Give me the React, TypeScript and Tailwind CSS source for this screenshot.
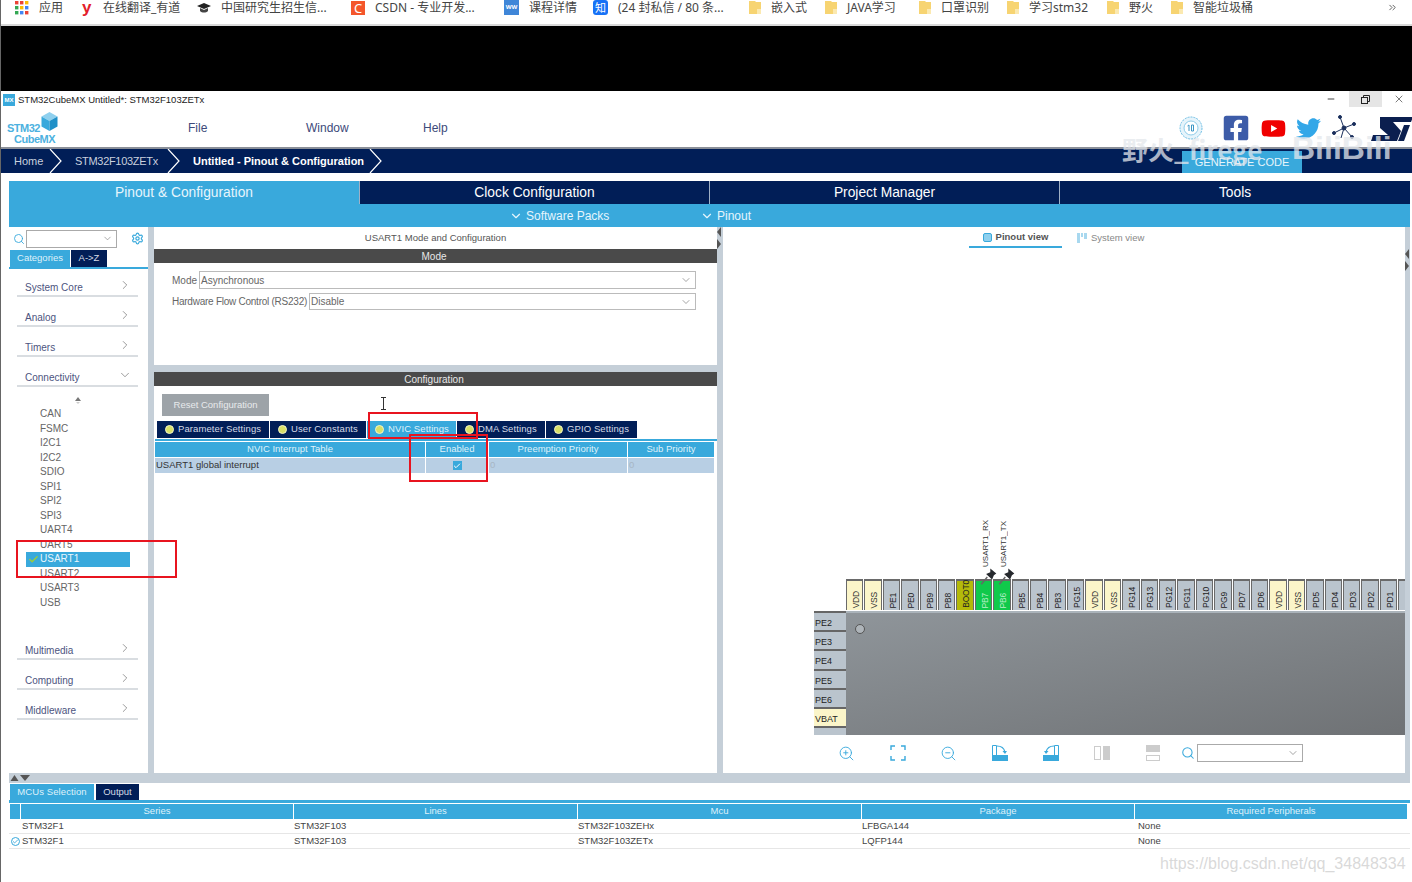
import React from "react";
import { ChevronDown, ChevronRight, Search, Settings, ZoomIn, ZoomOut, Minus, X, Check, ChevronsRight } from "lucide-react";
import { FaFacebookSquare, FaYoutube, FaTwitter } from "react-icons/fa";

const Folder = () => (
  <svg width="12" height="15" viewBox="0 0 12 15" className="shrink-0">
    <path d="M0 1h6l1 1h5v12H0z" fill="#f7d472" />
    <path d="M8 14V9h4v5z" fill="#fbe9b0" />
  </svg>
);

const Apps = () => (
  <svg width="14" height="14" viewBox="0 0 14 14" className="shrink-0">
    {[
      [0, 0, "#ea4335"], [5, 0, "#ea4335"], [10, 0, "#fbbc05"],
      [0, 5, "#34a853"], [5, 5, "#fbbc05"], [10, 5, "#4285f4"],
      [0, 10, "#34a853"], [5, 10, "#4285f4"], [10, 10, "#ea4335"],
    ].map(([x, y, c], i) => (
      <rect key={i} x={x as number} y={y as number} width="3.4" height="3.4" fill={c as string} />
    ))}
  </svg>
);

const bookmarks: { w: string; icon: React.ReactNode; text: string }[] = [
  { w: "w-[67px]", icon: <Apps />, text: "应用" },
  { w: "w-[115px]", icon: <span className="text-[17px] leading-[18px] h-[18px] font-bold text-[#e3202b] w-[11px] font-['Liberation_Sans',sans-serif]">y</span>, text: "在线翻译_有道" },
  {
    w: "w-[154px]",
    icon: <svg width="14" height="10" viewBox="0 0 14 10" className="shrink-0"><path d="M0 3l7-3 7 3-7 3z" fill="#222" /><path d="M3 5v3c2 2 6 2 8 0V5L7 7z" fill="#444" /></svg>,
    text: "中国研究生招生信...",
  },
  { w: "w-[153px]", icon: <span className="w-[14px] h-[14px] bg-[#f4562b] text-white text-[13px] leading-[14px] text-center shrink-0">C</span>, text: "CSDN - 专业开发..." },
  { w: "w-[89px]", icon: <span className="w-[15px] h-[15px] bg-[#3f86d8] text-white text-[6px] font-bold leading-[15px] text-center shrink-0">WW</span>, text: "课程详情" },
  { w: "w-[156px]", icon: <span className="w-[15px] h-[15px] rounded-[3px] bg-[#1772f6] text-white text-[11px] leading-[15px] text-center shrink-0">知</span>, text: "(24 封私信 / 80 条..." },
  { w: "w-[76px]", icon: <Folder />, text: "嵌入式" },
  { w: "w-[94px]", icon: <Folder />, text: "JAVA学习" },
  { w: "w-[88px]", icon: <Folder />, text: "口罩识别" },
  { w: "w-[100px]", icon: <Folder />, text: "学习stm32" },
  { w: "w-[64px]", icon: <Folder />, text: "野火" },
  { w: "w-[100px]", icon: <Folder />, text: "智能垃圾桶" },
];

function Crumb() {
  return (
    <svg width="14" height="24" viewBox="0 0 14 24" className="shrink-0" fill="none" stroke="#fff" strokeWidth="1.2">
      <path d="M1 0l11 12L1 24" />
    </svg>
  );
}

const Category = ({ name, open, first }: { name: string; open?: boolean; first?: boolean }) => (
  <div className={first ? "h-[28px] pt-[10px] ml-[8px] mr-[10px] border-b-2 border-[#d9dde1] flex items-center justify-between pl-[8px] pr-[6px] text-[10px] text-[#4d5480]" : "h-[30px] pt-[12px] ml-[8px] mr-[10px] border-b-2 border-[#d9dde1] flex items-center justify-between pl-[8px] pr-[6px] text-[10px] text-[#4d5480]"}>
    <span>{name}</span>
    {open ? <ChevronDown size={14} strokeWidth={1} className="-mt-[5px] text-[#555]" /> : <ChevronRight size={14} strokeWidth={1} className="-mt-[5px] text-[#555]" />}
  </div>
);

const items = ["CAN", "FSMC", "I2C1", "I2C2", "SDIO", "SPI1", "SPI2", "SPI3", "UART4", "UART5", "USART1", "USART2", "USART3", "USB"];

const topPins = ["VDD", "VSS", "PE1", "PE0", "PB9", "PB8", "BOOT0", "PB7", "PB6", "PB5", "PB4", "PB3", "PG15", "VDD", "VSS", "PG14", "PG13", "PG12", "PG11", "PG10", "PG9", "PD7", "PD6", "VDD", "VSS", "PD5", "PD4", "PD3", "PD2", "PD1", ""];

const pinColor = (n: string) => {
  if (n === "VDD" || n === "VSS") return "bg-[#fbf5c9] text-[#333]";
  if (n === "BOOT0") return "bg-[#b4b90a] text-[#222]";
  if (n === "PB7" || n === "PB6") return "bg-[#10c94b] text-[#b9efc9]";
  return "bg-[#bac4cd] text-[#222]";
};

const Pushpin = () => (
  <svg width="17" height="18" viewBox="0 0 14 15" className="absolute -top-[11px] left-[5px]">
    <path d="M8.500 0.500l5 4-2 1.500-1.500 3.500-5-4.500 3.500-1.500z" fill="#26292d" />
    <path d="M6 7.500L1 13.500" stroke="#666" strokeWidth="1.2" />
  </svg>
);

const leftPins = ["PE2", "PE3", "PE4", "PE5", "PE6", "VBAT", ""];

const Tab = ({ w, label, active }: { w: string; label: string; active?: boolean }) => (
  <div className={`${w} h-[17px] shrink-0 flex items-center pl-[8px] gap-[4px] text-[9.5px] tracking-[0.1px] ${active ? "bg-[#39a9dc] text-[#dff1fa]" : "bg-[#011e57] text-[#d5dbe6]"}`}>
    <span className="w-[9px] h-[9px] rounded-full bg-[#d8e068] border border-[#f3f5c5] shrink-0" />
    <span className="whitespace-nowrap">{label}</span>
  </div>
);

const RotateA = () => (
  <svg width="18" height="18" viewBox="0 0 18 18">
    <path d="M1.500 1.500h4v11" fill="none" stroke="#39a9dc" strokeWidth="1" />
    <path d="M1.500 1.500v11" fill="none" stroke="#39a9dc" strokeWidth="1" />
    <path d="M1 11h16v6H1z" fill="#39a9dc" />
    <path d="M6 2c4 0 7 2 8 6" fill="none" stroke="#39a9dc" strokeWidth="1.2" />
    <path d="M11.500 7l2.500 3 2-3z" fill="#39a9dc" />
  </svg>
);
const RotateB = () => (
  <svg width="18" height="18" viewBox="0 0 18 18">
    <path d="M16.500 1.500h-4v11M16.500 1.500v11" fill="none" stroke="#39a9dc" strokeWidth="1" />
    <path d="M1 11h16v6H1z" fill="#39a9dc" />
    <path d="M12 2C8 2 5 4 4 8" fill="none" stroke="#39a9dc" strokeWidth="1.2" />
    <path d="M2 7l2 3 2.500-3z" fill="#39a9dc" />
  </svg>
);

export default function App() {
  return (
    <div className="relative w-[1412px] h-[882px] overflow-hidden bg-white border-l border-[#666] font-['Liberation_Sans','Noto_Sans_CJK_SC',sans-serif] flex flex-col">
      {/* bookmarks */}
      <div className="h-[26px] shrink-0 flex items-center bg-white border-b-2 border-[#d8d8d8] pb-[9px] text-[12px] leading-none text-[#444] font-['Noto_Sans','Noto_Sans_CJK_SC',sans-serif]">
        <div className="w-[14px] shrink-0" />
        {bookmarks.map((b, i) => (
          <div key={i} className={`${b.w} shrink-0 flex items-center`}>
            <div className="flex items-center gap-[10px] whitespace-nowrap">
              {b.icon}
              <span>{b.text}</span>
            </div>
          </div>
        ))}
        <ChevronsRight size={11} className="ml-[116px] text-[#555]" />
      </div>
      {/* black */}
      <div className="h-[65px] shrink-0 bg-black" />
      {/* title bar */}
      <div className="h-[18px] shrink-0 flex items-center pl-[2px] text-[9.5px] text-[#222]">
        <span className="w-[12px] h-[12px] bg-[#39a9dc] text-white text-[6px] font-bold leading-[12px] text-center mr-[3px]">MX</span>
        <span className="whitespace-nowrap">STM32CubeMX Untitled*: STM32F103ZETx</span>
        <div className="ml-auto flex items-center h-[16px] self-start">
          <Minus size={10} strokeWidth={2.2} className="text-[#333] mr-[13px]" />
          <div className="w-[33px] h-[16px] bg-[#e5e5e5] flex items-center justify-center">
            <svg width="9" height="9" viewBox="0 0 9 9" fill="none" stroke="#222"><rect x="0.5" y="2.5" width="6" height="6" /><path d="M2.5 2.5v-2h6v6h-2" /></svg>
          </div>
          <X size={12} strokeWidth={1.2} className="text-[#222] ml-[11px] mr-[7px]" />
        </div>
      </div>
      {/* menu */}
      <div className="h-[40px] shrink-0 flex items-center relative border-b-2 border-[#8a8f98]">
        <div className="w-[187px] shrink-0 relative h-full pl-[6px] pt-[14px]">
          <div className="text-[11px] leading-[11px] text-[#4cb1e0] font-bold tracking-[-0.5px]">STM32</div>
          <div className="text-[11px] leading-[11px] text-[#4cb1e0] font-bold pl-[7px] tracking-[-0.5px]">CubeMX</div>
          <svg width="17" height="19" viewBox="0 0 17 19" className="absolute left-[40px] top-[3px]">
            <path d="M8.500 0l8 4.500-8 4.500-8-4.500z" fill="#8fd0ee" />
            <path d="M0.500 4.500l8 4.500v10l-8-4.500z" fill="#39a9dc" />
            <path d="M16.500 4.500l-8 4.500v10l8-4.500z" fill="#1f90c8" />
          </svg>
        </div>
        <div className="flex text-[12px] text-[#3d4a7a]">
          <span className="w-[118px]">File</span>
          <span className="w-[117px]">Window</span>
          <span>Help</span>
        </div>
        <div className="ml-auto flex items-center h-full relative">
          <svg width="24" height="24" viewBox="0 0 24 24" className="mr-[19px]">
            <circle cx="12" cy="12" r="11" fill="#e6f4fb" stroke="#6bbde4" strokeWidth="1" strokeDasharray="2 1" />
            <circle cx="12" cy="12" r="7" fill="#fff" stroke="#8fcdea" />
            <path d="M8.500 10l1.500-1v6M12.500 9h2v6h-2z" fill="none" stroke="#3d97c6" strokeWidth="1" />
          </svg>
          <FaFacebookSquare size={28} className="text-[#3d5ca8] mr-[11px]" />
          <FaYoutube size={25} className="text-[#f00000] mr-[10px]" />
          <FaTwitter size={25} className="text-[#33a7e8] mr-[10px]" />
          <svg width="26" height="26" viewBox="0 0 26 26" className="mr-[14px]" fill="#1a2f5c" stroke="#1a2f5c" strokeWidth="1">
            <path d="M13 13L9 2M13 13l10-4M13 13l8 9M13 13l-10 5M13 13l-3 10" />
            <circle cx="9" cy="2" r="1.5" /><circle cx="23" cy="9" r="1.5" /><circle cx="21" cy="22" r="1.500" /><circle cx="3" cy="18" r="1.5" /><circle cx="13" cy="13" r="2" />
          </svg>
          <svg width="42" height="24" viewBox="0 0 42 24" className="-mr-[1px] mt-[1px]" fill="#0b1f4f">
            <path d="M9 0H42L40 5H22L30 14L26 24H0L2 18H17L9 11Z" />
            <path d="M33 8H39L33 24H27Z" />
          </svg>
        </div>
      </div>
      {/* breadcrumb */}
      <div className="h-[24px] shrink-0 bg-[#011e57] flex items-center text-[11px] text-[#c9d0de] relative">
        <span className="pl-[13px] w-[48px] shrink-0">Home</span>
        <Crumb />
        <span className="ml-[12px] w-[92px] shrink-0 whitespace-nowrap tracking-[-0.3px]">STM32F103ZETx</span>
        <Crumb />
        <span className="ml-[12px] w-[176px] shrink-0 whitespace-nowrap font-bold text-white text-[11px]">Untitled - Pinout &amp; Configuration</span>
        <Crumb />
        <div className="ml-auto mr-[110px] w-[120px] h-[22px] self-end bg-[#39a9dc] text-[#e8f5fb] text-[11px] flex items-center justify-center whitespace-nowrap">GENERATE CODE</div>
      </div>
      <div className="h-[8px] shrink-0 bg-white" />
      {/* main tabs */}
      <div className="ml-[8px] mr-[2px] shrink-0 flex h-[23px] text-[13.8px]">
        <div className="w-[350px] pt-[1px] bg-[#39a9dc] text-[#e6f5fc] flex items-center justify-center">Pinout &amp; Configuration</div>
        <div className="w-[350px] pt-[1px] bg-[#011e57] text-white flex items-center justify-center border-l border-[#9fb0c6]">Clock Configuration</div>
        <div className="w-[350px] pt-[1px] bg-[#011e57] text-white flex items-center justify-center border-l border-[#9fb0c6]">Project Manager</div>
        <div className="flex-1 pt-[1px] bg-[#011e57] text-white flex items-center justify-center border-l border-[#9fb0c6]">Tools</div>
      </div>
      <div className="ml-[8px] mr-[2px] shrink-0 h-[23px] bg-[#39a9dc] text-[12px] text-[#e6f5fc] flex items-center">
        <div className="w-[500px]" />
        <ChevronDown size={14} className="mr-[3px]" />
        <span className="w-[174px] shrink-0">Software Packs</span>
        <ChevronDown size={14} className="mr-[3px]" />
        <span>Pinout</span>
      </div>
      {/* main */}
      <div className="h-[546px] shrink-0 flex ml-[8px] mr-[2px]">
        {/* left */}
        <div className="w-[139px] shrink-0 flex flex-col">
          <div className="h-[23px] flex items-center pl-[4px]">
            <Search size={12} strokeWidth={1.8} className="text-[#39a9dc]" />
            <div className="w-[91px] h-[18px] border border-[#aaa] flex items-center justify-end pr-[3px] ml-[1px]">
              <ChevronDown size={11} strokeWidth={1.2} className="text-[#666]" />
            </div>
            <Settings size={13} strokeWidth={2.2} className="text-[#39a9dc] ml-[14px]" />
          </div>
          <div className="h-[19px] flex items-end border-b-2 border-[#39a9dc] pl-[1px] text-[9.5px]">
            <div className="w-[60px] h-[17px] bg-[#39a9dc] text-[#dff1fa] flex items-center justify-center">Categories</div>
            <div className="w-[36px] h-[17px] ml-[1px] bg-[#011e57] text-[#d5dbe6] flex items-center justify-center">A-&gt;Z</div>
          </div>
          <Category first name="System Core" />
          <Category name="Analog" />
          <Category name="Timers" />
          <Category name="Connectivity" open />
          <div className="h-[243px] pt-[10px] text-[10px] text-[#666]">
            <div className="h-[10px] flex justify-center pr-[2px]">
              <svg width="8" height="8" viewBox="0 0 8 8"><path d="M4 0l3 4H1z" fill="#777" /><path d="M2 5h4l-2 2z" fill="#ccc" /></svg>
            </div>
            {items.map((it) => (
              <div key={it} className={it === "USART1" ? "h-[14.5px] leading-[14.5px] ml-[17px] w-[104px] bg-[#39a9dc] text-[#eaf6fc] pl-[14px] relative" : "h-[14.5px] leading-[14.5px] ml-[17px] pl-[14px]"}>
                {it === "USART1" && <Check size={11} strokeWidth={3} className="absolute left-[2px] top-[2px] text-[#9ccc3c]" />}
                {it}
              </div>
            ))}
          </div>
          <Category name="Multimedia" />
          <Category name="Computing" />
          <Category name="Middleware" />
        </div>
        <div className="w-[6px] shrink-0 bg-[#c5cfd8]" />
        {/* middle */}
        <div className="w-[563px] shrink-0 flex flex-col bg-[#c5cfd8]">
          <div className="h-[138px] shrink-0 bg-white flex flex-col">
            <div className="h-[22px] flex items-center justify-center text-[9.5px] text-[#555] pt-[1px]">USART1 Mode and Configuration</div>
            <div className="h-[14px] bg-[#4a4a4a] text-[#e8e8e8] text-[10px] flex items-center justify-center pr-[3px]">Mode</div>
            <div className="pl-[18px] mt-[8px] flex items-center text-[10px] text-[#666] h-[18px]">
              <span className="w-[27px]">Mode</span>
              <div className="w-[497px] h-[18px] border border-[#bbb] flex items-center pl-[1px] justify-between pr-[3px]">
                <span>Asynchronous</span>
                <ChevronDown size={12} strokeWidth={1.2} />
              </div>
            </div>
            <div className="pl-[18px] mt-[4px] flex items-center text-[10px] text-[#666] h-[17px]">
              <span className="w-[137px] whitespace-nowrap tracking-[-0.25px]">Hardware Flow Control (RS232)</span>
              <div className="w-[387px] h-[17px] border border-[#bbb] flex items-center pl-[1px] justify-between pr-[3px]">
                <span>Disable</span>
                <ChevronDown size={12} strokeWidth={1.2} />
              </div>
            </div>
          </div>
          <div className="h-[7px] shrink-0" />
          <div className="flex-1 bg-white flex flex-col">
            <div className="h-[14px] shrink-0 bg-[#4a4a4a] text-[#e8e8e8] text-[10px] flex items-center justify-center pr-[3px]">Configuration</div>
            <div className="h-[22px] w-[107px] mt-[8px] ml-[8px] bg-[#9da3a8] text-[#e8eaec] text-[9.5px] flex items-center justify-center shrink-0">Reset Configuration</div>
            <div className="flex gap-[1px] mt-[5px] ml-[3px] shrink-0">
              <Tab w="w-[112px]" label="Parameter Settings" />
              <Tab w="w-[96px]" label="User Constants" />
              <Tab w="w-[89px]" label="NVIC Settings" active />
              <Tab w="w-[88px]" label="DMA Settings" />
              <Tab w="w-[91px]" label="GPIO Settings" />
            </div>
            <div className="h-[2px] bg-[#39a9dc] mt-[1px] ml-[1px] shrink-0" />
            <div className="flex mt-[1px] ml-[1px] h-[15px] text-[9.5px] text-[#dff1fa] gap-[1px] shrink-0">
              <div className="w-[270px] bg-[#39a9dc] flex items-center justify-center">NVIC Interrupt Table</div>
              <div className="w-[62px] bg-[#39a9dc] flex items-center justify-center">Enabled</div>
              <div className="w-[138px] bg-[#39a9dc] flex items-center justify-center">Preemption Priority</div>
              <div className="w-[86px] bg-[#39a9dc] flex items-center justify-center">Sub Priority</div>
            </div>
            <div className="flex mt-[1px] ml-[1px] h-[15px] text-[9.5px] text-[#333] gap-[1px] shrink-0">
              <div className="w-[270px] bg-[#b8cfe4] flex items-center pl-[1px]">USART1 global interrupt</div>
              <div className="w-[62px] bg-[#b8cfe4] flex items-center justify-center">
                <span className="w-[9px] h-[9px] bg-[#39a9dc] flex items-center justify-center"><Check size={8} strokeWidth={3} className="text-white" /></span>
              </div>
              <div className="w-[138px] bg-[#b8cfe4] flex items-center text-[#a7b6c4] pl-[1px]">0</div>
              <div className="w-[86px] bg-[#b8cfe4] flex items-center text-[#a7b6c4] pl-[1px]">0</div>
            </div>
          </div>
        </div>
        {/* collapse */}
        <div className="w-[6px] shrink-0 bg-[#c5cfd8] flex flex-col">
          <svg width="5" height="22" viewBox="0 0 5 22"><path d="M4 0v10L0 5z" fill="#555" /><path d="M0 12v10l4-5z" fill="#555" /></svg>
        </div>
        {/* right */}
        <div className="flex-1 min-w-0 bg-white flex flex-col overflow-hidden">
          <div className="h-[20px] mt-[1px] flex items-start pl-[246px] shrink-0 text-[9.5px]">
            <div className="w-[93px] h-[20px] border-b-2 border-[#39a9dc] flex items-center justify-center gap-[4px] font-bold text-[#555]">
              <span className="w-[9px] h-[9px] rounded-[2px] bg-[#8fd0ee] border border-[#39a9dc]" />
              Pinout view
            </div>
            <div className="ml-[15px] h-[20px] flex items-center gap-[4px] text-[#888]">
              <svg width="10" height="10" viewBox="0 0 10 10" fill="#a8d8ef"><rect width="3" height="10" /><rect x="4" width="2" height="4" /><rect x="7" width="3" height="6" /></svg>
              System view
            </div>
          </div>
          <div className="flex-1 min-h-0" />
          {/* top pin labels + pins */}
          <div className="flex ml-[123px] h-[32px] shrink-0">
            {topPins.map((p, i) => (
              <div key={i} className="w-[18.41px] shrink-0 pr-[1px] h-[31px] relative">
                <div className={`h-full border-t-2 border-l border-r border-[#6a6a6a] flex items-end justify-center pl-[3px] pb-[2px] ${pinColor(p)}`}>
                  <span className="[writing-mode:vertical-rl] rotate-180 text-[8.5px] leading-none tracking-[-0.2px]">{p}</span>
                </div>
                {p === "PB7" && (
                  <>
                    <Pushpin />
                    <span className="absolute bottom-[43px] left-[7px] [writing-mode:vertical-rl] rotate-180 text-[8px] leading-none text-[#333] whitespace-nowrap">USART1_RX</span>
                  </>
                )}
                {p === "PB6" && (
                  <>
                    <Pushpin />
                    <span className="absolute bottom-[43px] left-[7px] [writing-mode:vertical-rl] rotate-180 text-[8px] leading-none text-[#333] whitespace-nowrap">USART1_TX</span>
                  </>
                )}
              </div>
            ))}
          </div>
          {/* chip */}
          <div className="flex h-[124px] shrink-0 pl-[91px] overflow-hidden">
            <div className="w-[32px] shrink-0 flex flex-col">
              {leftPins.map((p, i) => (
                <div key={i} className={`h-[19.2px] shrink-0 border-t-2 border-[#666] text-[9px] leading-none pl-[1px] flex items-center pt-[4px] text-[#222] ${p === "VBAT" ? "bg-[#fbf5c9]" : "bg-[#bac4cd]"}`}>{p}</div>
              ))}
            </div>
            <div className="flex-1 relative bg-gradient-to-br from-[#8f959a] to-[#6f7275] border-t-2 border-[#aab3ba]">
              <span className="absolute left-[9px] top-[11px] w-[10px] h-[10px] rounded-full bg-[#aeb4b9] border border-[#555]" />
            </div>
          </div>
          {/* toolbar */}
          <div className="h-[38px] shrink-0 flex items-center pl-[98px] pb-[2px] text-[#39a9dc]">
            <div className="w-[51px] flex justify-center"><ZoomIn size={17} strokeWidth={1.3} /></div>
            <div className="w-[51px] flex justify-center">
              <svg width="16" height="16" viewBox="0 0 16 16" fill="none" stroke="#39a9dc" strokeWidth="1.4"><path d="M1 5V1h4M11 1h4v4M15 11v4h-4M5 15H1v-4" /></svg>
            </div>
            <div className="w-[51px] flex justify-center"><ZoomOut size={17} strokeWidth={1.3} /></div>
            <div className="w-[51px] flex justify-center"><RotateA /></div>
            <div className="w-[51px] flex justify-center"><RotateB /></div>
            <div className="w-[51px] flex justify-center">
              <svg width="16" height="14" viewBox="0 0 16 14"><rect x="0.5" y="0.5" width="6" height="13" fill="none" stroke="#ccc" /><rect x="9" width="7" height="14" fill="#ccc" /></svg>
            </div>
            <div className="w-[51px] flex justify-center">
              <svg width="14" height="16" viewBox="0 0 14 16"><rect width="14" height="7" fill="#ccc" /><rect x="0.5" y="10.500" width="13" height="5" fill="none" stroke="#ccc" /></svg>
            </div>
            <Search size={14} strokeWidth={1.8} className="ml-[3px]" />
            <div className="ml-[2px] w-[106px] h-[18px] border border-[#aaa] flex items-center justify-end pr-[3px]">
              <ChevronDown size={12} strokeWidth={1.2} className="text-[#666]" />
            </div>
          </div>
        </div>
        <div className="w-[5px] shrink-0 bg-[#c5cfd8] pt-[22px]">
          <svg width="5" height="22" viewBox="0 0 5 22"><path d="M4 0v10L0 5z" fill="#555" /><path d="M0 12v10l4-5z" fill="#555" /></svg>
        </div>
      </div>
      {/* bottom */}
      <div className="ml-[8px] mr-[2px] flex-1 flex flex-col">
        <div className="h-[10px] shrink-0 bg-[#c5cfd8] flex items-center pl-[1px] gap-[1px]">
          <svg width="9" height="6" viewBox="0 0 9 6"><path d="M4.500 0l4 6H0.500z" fill="#555" /></svg>
          <svg width="10" height="6" viewBox="0 0 10 6"><path d="M0 0h10L5 6z" fill="#555" /></svg>
        </div>
        <div className="flex h-[16px] mt-[1px] pl-[1px] text-[9.5px] shrink-0">
          <div className="w-[84px] bg-[#39a9dc] text-[#dff1fa] flex items-center justify-center tracking-[0.1px]">MCUs Selection</div>
          <div className="w-[43px] ml-[2px] bg-[#011e57] text-[#d5dbe6] flex items-center justify-center">Output</div>
        </div>
        <div className="h-[3px] bg-[#39a9dc] shrink-0" />
        <div className="flex gap-[1px] h-[15px] mt-[1px] pl-[1px] text-[9.5px] text-[#dff1fa] shrink-0">
          <div className="w-[10px] bg-[#39a9dc]" />
          <div className="w-[272px] bg-[#39a9dc] flex items-center justify-center">Series</div>
          <div className="w-[283px] bg-[#39a9dc] flex items-center justify-center">Lines</div>
          <div className="w-[283px] bg-[#39a9dc] flex items-center justify-center">Mcu</div>
          <div className="w-[272px] bg-[#39a9dc] flex items-center justify-center">Package</div>
          <div className="w-[272px] bg-[#39a9dc] flex items-center justify-center">Required Peripherals</div>
        </div>
        {[
          ["STM32F103ZEHx", "LFBGA144", false],
          ["STM32F103ZETx", "LQFP144", true],
        ].map(([mcu, pkg, sel], i) => (
          <div key={i} className="flex gap-[1px] h-[15px] pl-[1px] text-[9.5px] text-[#444] border-b border-[#e6e6e6] shrink-0 bg-white">
            <div className="w-[10px] flex items-center justify-center">
              {sel && <span className="w-[9px] h-[9px] rounded-full border border-[#39a9dc] flex items-center justify-center"><Check size={7} strokeWidth={3} className="text-[#39a9dc]" /></span>}
            </div>
            <div className="w-[272px] flex items-center pl-[1px]">STM32F1</div>
            <div className="w-[283px] flex items-center">STM32F103</div>
            <div className="w-[283px] flex items-center">{mcu as string}</div>
            <div className="w-[272px] flex items-center">{pkg as string}</div>
            <div className="w-[272px] flex items-center pl-[3px]">None</div>
          </div>
        ))}
      </div>

      {/* annotations */}
      <div className="absolute left-[15px] top-[540px] w-[161px] h-[38px] border-2 border-[#e8141f]" />
      <div className="absolute left-[367px] top-[412px] w-[110px] h-[27px] border-2 border-[#e8141f]" />
      <div className="absolute left-[408px] top-[434px] w-[79px] h-[48px] border-2 border-[#e8141f]" />
      {/* text cursor */}
      <svg width="7" height="13" viewBox="0 0 7 13" className="absolute left-[379px] top-[397px]" fill="none" stroke="#333" strokeWidth="1">
        <path d="M1 0.500h5M1 12.500h5M3.500 0.500v12" />
      </svg>
      {/* watermarks */}
      <div className="absolute left-[1121px] top-[134px] text-[26px] leading-[30px] font-bold text-[#e4e7ec]/75 whitespace-nowrap font-['Noto_Sans_CJK_SC',sans-serif]">野火_firege</div>
      <div className="absolute left-[1291px] top-[130px] text-[32px] leading-[36px] font-bold text-[#e4e7ec]/75 whitespace-nowrap">BiliBili</div>
      <div className="absolute left-[1159px] top-[854px] text-[16px] leading-[20px] text-[#cfcfcf]/80 whitespace-nowrap">https://blog.csdn.net/qq_34848334</div>
    </div>
  );
}
